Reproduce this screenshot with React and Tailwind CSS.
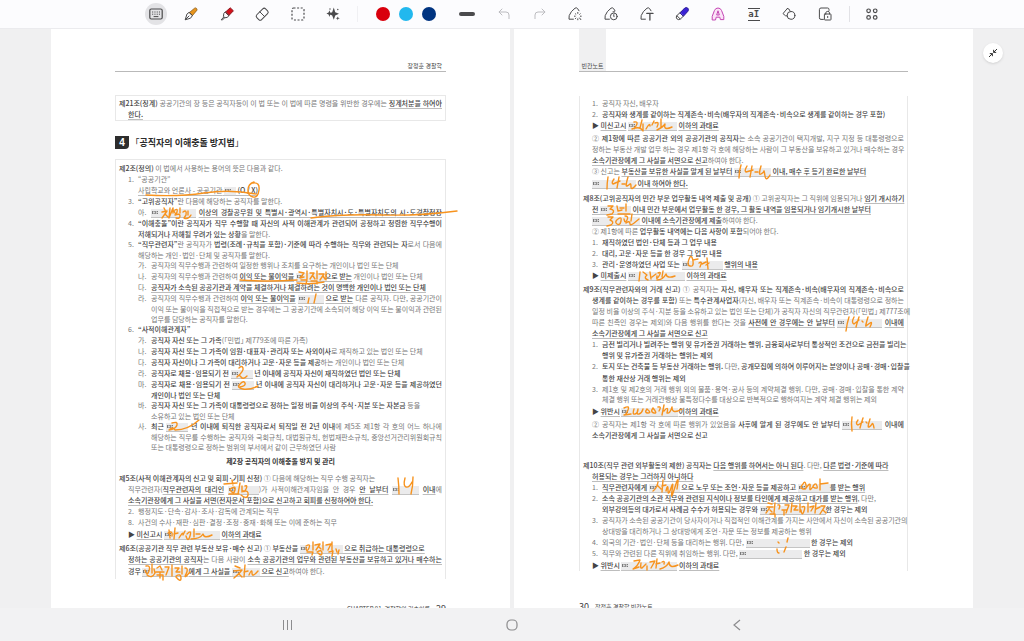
import clsx from 'clsx';

const PALETTE = ['bg-[#d9000d]', 'bg-[#22b8ee]', 'bg-[#003480]'];

// ---------- toolbar icons ----------

function Icon({ children, className = 'text-[#4a4a4c]' }) {
    return (
        <svg width="16" height="16" viewBox="0 0 16 16" fill="none" stroke="currentColor" strokeWidth="1" strokeLinecap="round" strokeLinejoin="round" className={className}>
            {children}
        </svg>
    );
}

const KeyboardIcon = () => (
    <Icon>
        <rect x="1.8" y="3" width="12.4" height="10" rx="1.5" strokeWidth="1.2" />
        <path d="M4.5 6h.3M6.8 6h.3M9.1 6h.3M11.3 6h.3M4.5 8.2h.3M6.8 8.2h.3M9.1 8.2h.3M11.3 8.2h.3M6 10.6h4" />
    </Icon>
);

const PenIcon = () => (
    <Icon>
        <path d="M6.5 6.5 11.6 2.2Q12.6 1.5 13.5 2.4T13.8 4.4L9.5 9.5Z" fill="#e8951d" stroke="#8a5a17" strokeWidth=".8" />
        <path d="M6.5 6.5 9.5 9.5 7.5 12.2 2.2 13.8 3.8 8.5ZM2.4 13.6 6 10" />
    </Icon>
);

const MarkerIcon = () => (
    <Icon>
        <path d="M6.6 6 11.2 1.8 14.4 4.8 10 9.4Z" fill="#d4111b" stroke="#8c1b22" />
        <path d="M6.6 6 10 9.4 8.4 11.4 5.6 11.8 4.4 10.4 4.8 7.8ZM4.8 11 2.2 13.8 3.4 14 5.6 11.8" />
    </Icon>
);

const EraserIcon = () => (
    <Icon>
        <rect x="2" y="4.8" width="12.4" height="6.8" rx="2" transform="rotate(-45 8.2 8.2)" />
        <path d="M5.8 5.8 10.6 10.6" />
    </Icon>
);

const SelectIcon = () => (
    <Icon>
        <rect x="2" y="2" width="12" height="12" rx="1.5" strokeWidth="1.2" strokeDasharray="2 1.6" strokeLinecap="butt" />
    </Icon>
);

const SparkleIcon = () => (
    <Icon>
        <path d="M8.8 1.6 10.2 6.2 14 7.8 10.2 9.6 8.8 13.8 7.2 9.6 3.4 7.8 7.2 6.2Z" fill="currentColor" stroke="none" />
        <path d="M4.4 4.2 5.2 6.6 7.4 7.6 5.2 8.6 4.4 11 3.6 8.6 1.4 7.6 3.6 6.6ZM12.8 10.4 13.3 11.8 14.8 12.3 13.3 12.8 12.8 14.2 12.2 12.8 10.8 12.3 12.2 11.8Z" fill="currentColor" stroke="none" />
        <path d="M12.8 3.4v.2M5 3v.1" strokeWidth="1.4" />
    </Icon>
);

const UndoIcon = () => (
    <Icon className="text-[#bcbcc0]">
        <path d="M6 3 3 6 6 9M3.2 6H10Q13 6 13 9V12.6" />
    </Icon>
);

const RedoIcon = () => (
    <Icon className="text-[#bcbcc0]">
        <path d="M10 3 13 6 10 9M12.8 6H6Q3 6 3 9V12.6" />
    </Icon>
);

// shared outline for the three "handwriting to ..." tools
const NIB = 'M6.4 13.2H2Q1.2 9.8 4.4 5.6L8 2.2Q9.4 1.2 10.6 2.6L12 4.8';

const ShapePenIcon = () => (
    <Icon>
        <path d={NIB} />
        <path d="M10.8 6.4v1M10.8 12.8v1M7.4 10.2h.8M13.4 10.2h.8M8.4 7.8l.5.5M12.6 12l1.2 1.6M13.2 7.8l-.5.5M8.4 12.6l.5-.5" />
    </Icon>
);

const TimedPenIcon = () => (
    <Icon>
        <path d={NIB} />
        <circle cx="10.8" cy="10.4" r="3.4" />
        <path d="M10.8 8.6v2h.2M10 5.8h1.6" />
    </Icon>
);

const TextPenIcon = () => (
    <Icon>
        <path d={NIB} />
        <path d="M7.8 7.4h6.2M10.9 7.4v6.6" strokeWidth="1.3" />
    </Icon>
);

const BrushIcon = () => (
    <Icon>
        <path d="M6.2 6.6 10.6 2.2Q12.4 .8 13.8 2.2T13.8 5.4L9.6 10Z" fill="#3b22d6" stroke="#2a1c94" />
        <path d="M6.2 6.6 3.2 9.2Q1.4 11 2.8 12.8 4.8 14.6 6.6 12.8L9.6 10M3 9.8 6.2 13" />
    </Icon>
);

const LetterIcon = () => (
    <Icon className="text-[#c445b4]">
        <path d="M2.2 13.6V10.4L4.4 4.6Q5.4 2 8 2T11.6 4.6L13.8 10.4V13.6H10.4L9.8 11.2H6.2L5.6 13.6Z" fill="#fbe3f7" />
        <path d="M6.8 8.6 8 4.8 9.2 8.6Z" fill="#fff" />
    </Icon>
);

const TextAlignIcon = () => (
    <span className="flex h-[13px] w-3 items-center justify-center border-y border-[#4a4a4c] font-['DejaVu_Sans_Mono',monospace] text-[9px] leading-[9px] font-bold text-[#4a4a4c]">aI</span>
);

const ShapesIcon = () => (
    <Icon>
        <path d="M6.4 2.4 2 7.6 4.6 9.8 6.4 10M6.4 2.4Q8.6 2.4 9.2 5.2" />
        <circle cx="10" cy="9.4" r="3.9" />
    </Icon>
);

const LockPageIcon = () => (
    <Icon>
        <path d="M6.4 13.4H4Q2.4 13.4 2.4 11.8V3.6Q2.4 2 4 2H10.6Q12 2 12 3.6V4.4" />
        <rect x="7.4" y="8" width="6.6" height="6" rx=".6" />
        <path d="M8.8 8V6.8Q9 5.4 10.7 5.4T12.6 6.8V8M10.7 10.4v1.2" />
    </Icon>
);

const AppsIcon = () => (
    <Icon>
        <g strokeWidth="1.2">
            <circle cx="4.6" cy="4.8" r="1.8" />
            <circle cx="11.2" cy="4.8" r="1.8" />
            <circle cx="4.6" cy="11.4" r="1.8" />
            <circle cx="11.2" cy="11.4" r="1.8" />
        </g>
    </Icon>
);

function Tool({ label, active, children }) {
    return (
        <button
            type="button"
            aria-label={label}
            className={clsx('flex size-[22px] items-center justify-center rounded-full', active && 'bg-[#e3e3e6]')}
        >
            {children}
        </button>
    );
}

function Toolbar() {
    return (
        <header className="flex h-[29px] shrink-0 items-center justify-center border-b border-[#ebebee] bg-[#fcfcfe]">
            <div className="grid w-[213px] grid-cols-6 justify-items-center">
                <Tool label="키보드" active><KeyboardIcon /></Tool>
                <Tool label="펜"><PenIcon /></Tool>
                <Tool label="형광펜"><MarkerIcon /></Tool>
                <Tool label="지우개"><EraserIcon /></Tool>
                <Tool label="선택"><SelectIcon /></Tool>
                <Tool label="AI"><SparkleIcon /></Tool>
            </div>
            <div className="ml-1.5 h-4 w-px bg-[#f0f0f3]" />
            <div className="ml-[18px] flex gap-[9px]">
                {PALETTE.map((color) => (
                    <button key={color} type="button" aria-label="색상" className={clsx('size-3.5 rounded-full', color)} />
                ))}
            </div>
            <button type="button" aria-label="굵기" className="ml-[23px] h-1 w-4 rounded-full bg-[#4b4b4d]" />
            <div className="ml-[11px] grid w-[357px] grid-cols-10 justify-items-center">
                <Tool label="실행 취소"><UndoIcon /></Tool>
                <Tool label="다시 실행"><RedoIcon /></Tool>
                <Tool label="도형 변환"><ShapePenIcon /></Tool>
                <Tool label="시간 펜"><TimedPenIcon /></Tool>
                <Tool label="텍스트 변환"><TextPenIcon /></Tool>
                <Tool label="브러시"><BrushIcon /></Tool>
                <Tool label="글자 스타일"><LetterIcon /></Tool>
                <Tool label="글자 정렬"><TextAlignIcon /></Tool>
                <Tool label="도형"><ShapesIcon /></Tool>
                <Tool label="페이지 잠금"><LockPageIcon /></Tool>
            </div>
            <div className="ml-1.5 h-4 w-px bg-[#e2e2e6]" />
            <div className="ml-[7px] flex w-[29px] justify-center">
                <Tool label="더보기"><AppsIcon /></Tool>
            </div>
        </header>
    );
}

// ---------- document pieces ----------

function Ink({ d }) {
    return (
        <svg className="pointer-events-none absolute top-0 left-0 z-10 size-full overflow-visible" fill="none" stroke="#f7931e" strokeWidth="1.4" strokeLinecap="round" strokeLinejoin="round">
            <path d={d} />
        </svg>
    );
}

// grey gap in the text, with its small tag and whatever was written into it
function Blank({ w, ink }) {
    return (
        <span className={clsx('relative inline-block h-[9px] border-b border-[#c4c4c4] bg-[#ebebec] align-middle', w)}>
            <svg className="absolute top-0.5 left-px" width="6" height="3" fill="#7a7a7a">
                <path d="M0 0h1v3H0zM1.5 0h1.2v1.2H1.5zM1.5 2h1.2v1H1.5zM3.2 0h1v3h-1zM4.8 0H6v1.2H4.8zM4.8 2H6v1H4.8z" />
            </svg>
            {ink && <Ink d={ink} />}
        </span>
    );
}

const B = ({ children }) => <span className="font-medium text-[#444]">{children}</span>;

const U = ({ children, ink }) => (
    <span className="relative font-medium text-[#444] underline decoration-[#bdbdbd] decoration-1 underline-offset-2">
        {children}
        {ink && <Ink d={ink} />}
    </span>
);

const INDENT = ['pl-0', 'pl-[9px]', 'pl-[19px]', 'pl-8'];

function Row({ lv = 0, m, full, tight, gap, children }) {
    return (
        <div className={clsx('flex whitespace-nowrap', INDENT[lv], tight ? 'h-2.5 leading-[10px]' : 'h-[11px] leading-[11px]', gap)}>
            {m && <span className={clsx('shrink-0', lv === 2 ? 'w-[13px]' : 'w-2.5')}>{m}</span>}
            <div className={clsx('min-w-0 flex-1', full && '[text-align-last:justify]')}>{children}</div>
        </div>
    );
}

function LeftPage() {
    return (
        <article className="overflow-hidden bg-white px-16">
            <div className="flex h-[43px] items-end justify-end border-b border-[#b9b9b9] pr-1 text-[6px] leading-[10px] text-[#444]">장정훈 경찰학</div>

            <section className="mt-[23px] border border-[#e8e8e8] px-[3px] pt-0.5">
                <Row full><B>제21조(징계)</B> 공공기관의 장 등은 공직자등이 이 법 또는 이 법에 따른 명령을 위반한 경우에는 <U>징계처분을 하여야</U></Row>
                <Row lv={1}><U>한다.</U></Row>
            </section>

            <div className="mt-[15px] flex h-[13px] items-center gap-1.5">
                <span className="flex h-[13px] w-3.5 items-center justify-center rounded-br-[4px] bg-[#2d2d2d] font-['Liberation_Sans',sans-serif] text-[10px] font-bold text-white">4</span>
                <h2 className="text-[9px] leading-[13px] font-bold text-[#2c2c2c]"><span className="font-normal">「</span>공직자의 이해충돌 방지법<span className="font-normal">」</span></h2>
            </div>

            <section className="mt-2.5 border border-b-0 border-[#e8e8e8] px-[3px] pt-[3px] pb-0.5">
                <Row><B>제2조(정의)</B> 이 법에서 사용하는 용어의 뜻은 다음과 같다.</Row>
                <Row lv={1} m="1.">“공공기관”</Row>
                <Row lv={2}>
                    <span className="relative underline decoration-[#bdbdbd] underline-offset-2">
                        사립학교와 언론사 - 공공기관{' '}
                        <Ink d="M8 10Q40 12 66 8T118 9" />
                    </span>
                    <Blank w="w-3" />
                    <U> (O / <span className="relative">X<Ink d="M3 -3Q-3 -1 -3 5T2 12 8 5 2 -2" /></span>)</U>
                </Row>
                <Row lv={1} m="3."><B>“고위공직자”</B>란 다음에 해당하는 공직자를 말한다.</Row>
                <Row lv={2} m="아." full>
                    <Blank w="w-[45px]" ink="M13 -1L14 1M11 3L16 2Q14 5 11 9M14 5L17 8M19 -1L18 9 22 -1 22 4M24 1Q27 -1 26 3T23 2M29 -1V4M24 6Q29 4 29 7T25 9M32 3Q36 0 35 6L33 9Q37 11 40 6M37 2V6" />{' '}
                    <U>이상의 경찰공무원 및 특별시·광역시·<span className="relative">특별자치시·도·특별자치도의<Ink d="M0 11Q30 7 70 8T146 4" /></span> 시·도경찰청장</U>
                </Row>
                <Row lv={1} m="4." full><B>“이해충돌”이란 공직자가 직무 수행할 때 자신의 사적 이해관계가 관련되어 공정하고 청렴한 직무수행이</B></Row>
                <Row lv={2} tight><B>저해되거나 저해될 우려가 있는 상황</B>을 말한다.</Row>
                <Row lv={1} m="5." full><B>“직무관련자”</B>란 공직자가 <B>법령(조례·규칙을 포함)·기준에 따라 수행하는 직무와 관련되는 자</B>로서 다음에</Row>
                <Row lv={2} tight>해당하는 개인·법인·단체 및 공직자를 말한다.</Row>
                <Row lv={2} m="가.">공직자의 직무수행과 관련하여 일정한 행위나 조치를 요구하는 개인이나 법인 또는 단체</Row>
                <Row lv={2} m="나.">
                    공직자의 직무수행과 관련하여 <U ink="M1 9Q30 11 58 9">이익 또는 불이익을</U>{' '}
                    <Blank w="w-[29px]" ink="M1 10Q14 12 28 9M3 -1L8 0 4 5 8 4M11 -2V6M5 7L11 7 10 11M14 0L18 0 14 6M17 3L19 6M21 -2V6M15 8H21V11M23 1L28 1 24 7M27 3L29 6M30 -1V7" />
                    <U>으로 받는</U> 개인이나 법인 또는 단체
                </Row>
                <Row lv={2} m="다."><U>공직자가 소속된 공공기관과 계약을 체결하거나 체결하려는 것이 명백한 개인이나 법인 또는 단체</U></Row>
                <Row lv={2} m="라." full>
                    공직자의 직무수행과 관련하여 <U>이익 또는 불이익을</U> <Blank w="w-[26px]" ink="M11 3L10 8M18 -1L16 8" /> <U>으로 받는</U> 다른 공직자. 다만, 공공기관이
                </Row>
                <Row lv={3} full tight>이익 또는 불이익을 직접적으로 받는 경우에는 그 공공기관에 소속되어 해당 이익 또는 불이익과 관련된</Row>
                <Row lv={3} tight>업무를 담당하는 공직자를 말한다.</Row>
                <Row lv={1} m="6."><B>“사적이해관계자”</B></Row>
                <Row lv={2} m="가."><B>공직자 자신 또는 그 가족</B>(「민법」 제779조에 따른 가족)</Row>
                <Row lv={2} m="나."><B>공직자 자신 또는 그 가족이 임원·대표자·관리자 또는 사외이사</B>로 재직하고 있는 법인 또는 단체</Row>
                <Row lv={2} m="다."><B>공직자 자신이나 그 가족이 대리하거나 고문·자문 등을 제공</B>하는 개인이나 법인 또는 단체</Row>
                <Row lv={2} m="라."><B>공직자로 채용·임용되기 전 </B><Blank w="w-[22px]" ink="M8 -2Q11 -5 12 -2T6 7Q8 4 10 7T16 6" /><B> 년 이내에 공직자 자신이 재직하였던 법인 또는 단체</B></Row>
                <Row lv={2} m="마." full>
                    <B>공직자로 채용·임용되기 전 </B><Blank w="w-[22px]" ink="M8 6Q14 5 13 2T8 3 11 8 26 5" /><B> 년 이내에 공직자 자신이 대리하거나 고문·자문 등을 제공하였던</B>
                </Row>
                <Row lv={3} tight><B>개인이나 법인 또는 단체</B></Row>
                <Row lv={2} m="바."><B>공직자 자신 또는 그 가족이 대통령령으로 정하는 일정 비율 이상의 주식·지분 또는 자본금</B> 등을</Row>
                <Row lv={3} tight>소유하고 있는 법인 또는 단체</Row>
                <Row lv={2} m="사." full>
                    <B>최근 </B><Blank w="w-[22px]" ink="M6 0Q12 -2 11 2T3 7Q7 3 9 7 22 7 33 -3" /> <B>년 이내에 퇴직한 공직자로서 퇴직일 전 2년 이내</B>에 제5조 제1항 각 호의 어느 하나에
                </Row>
                <Row lv={3} full tight>해당하는 직무를 수행하는 공직자와 국회규칙, 대법원규칙, 헌법재판소규칙, 중앙선거관리위원회규칙</Row>
                <Row lv={3} tight>또는 대통령령으로 정하는 범위의 부서에서 같이 근무하였던 사람</Row>

                <h3 className="mt-1 h-[11px] text-center leading-[11px] font-bold text-[#383838]">제2장 공직자의 이해충돌 방지 및 관리</h3>

                <Row gap="mt-1.5"><B>제5조(사적 이해관계자의 신고 및 회피·기피 신청)</B> ① 다음에 해당하는 직무 수행 공직자는</Row>
                <Row lv={1} full>
                    직무관련자(<U>직무관련자의 대리인</U>{' '}
                    <Blank w="w-[31px]" ink="M-4 -2L9 -3M4 -6L5 -1M2 3Q8 -1 7 4T2 4M1 8H11M12 -3L10 8M14 0V6M17 0Q20 -1 18 3T15 5Q21 4 20 9T13 9" />
                    )가 사적이해관계자임을 안 경우 <U>안 날부터</U> <Blank w="w-[27px]" ink="M6 -8Q7 0 7 8M13 -8Q11 0 14 1T20 -4M21 -9Q21 0 19 8" /> <U>이내</U>에
                </Row>
                <Row lv={1}><U>소속기관장에게 그 사실을 서면(전자문서 포함)으로 신고하고 회피를 신청하여야 한다.</U></Row>
                <Row lv={1} m="2.">행정지도·단속·감사·조사·감독에 관계되는 직무</Row>
                <Row lv={1} m="8.">사건의 수사·재판·심판·결정·조정·중재·화해 또는 이에 준하는 직무</Row>
                <Row lv={1} gap="mt-px"><B>▶ <U>미신고시</U> <Blank w="w-[56px]" ink="M5 -1L6 7M4 2Q9 -1 8 5M11 -3L10 8M10 3L14 2M15 7Q20 -1 19 4L21 0M23 3Q28 -2 26 5T22 5M30 -2V6M32 3H36M27 8Q36 8 39 3 40 8 48 4" /> <U>이하의 과태료</U></B></Row>

                <Row gap="mt-[3px]">
                    <B>제6조(공공기관 직무 관련 부동산 보유·매수 신고)</B> ① <B>부동산을 </B>
                    <Blank w="w-[43px]" ink="M6 1Q11 -2 9 3T6 3M13 -3V5M7 7H13L12 10M15 0L20 -1 16 5M19 2L21 4M23 -3V5M17 7Q22 4 22 8T18 8M26 0L31 -1 28 5M32 -3V5M29 7L33 6 32 11M36 4L37 7M39 5L38 9" />
                    <U> 으로 취급하는 대통령령으로</U>
                </Row>
                <Row lv={1} full><U>정하는 공공기관의 공직자</U>는 다음 사람이 <U>소속 공공기관의 업무와 관련된 부동산을 보유하고 있거나 매수하는</U></Row>
                <Row lv={1} gap="mt-px">
                    <B>경우 </B>
                    <Blank w="w-[46px]" ink="M4 -2Q9 -3 7 3T3 2M10 -4V5M5 7Q10 11 13 5L12 1M15 0L18 -2 20 2M14 4H22M18 4V10M15 7H21V12M23 -1L27 -1 24 7M30 -3V8M33 0L37 0 34 4 38 4M40 -2V6M34 8Q39 5 39 10T34 9M43 0Q47 0 44 6T48 4" />
                    <U>에게 그 사실을 </U>
                    <Blank w="w-[28px]" ink="M3 -2L8 0M2 3L10 2Q7 6 2 10M7 6L10 9M13 -3L12 9M12 4L16 3M17 7Q20 0 20 5T26 3" />
                    <U> 으로 신고</U>하여야 한다.
                </Row>
            </section>

            <footer className="mt-6 flex h-3 items-center justify-end gap-1.5 text-[6px] leading-3 text-[#444]">
                <span>CHAPTER 01. 경찰학의 기초이론</span>
                <span className="text-[9px]">29</span>
            </footer>
        </article>
    );
}

function RightPage() {
    return (
        <article className="overflow-hidden bg-white px-[65px]">
            <div className="flex h-[43px] items-end border-b border-[#b9b9b9] text-[6px] leading-[10px] text-[#444]">
                <span className="flex h-full w-[27px] items-end justify-center bg-[#f0f0f1]">빈칸노트</span>
            </div>

            <section className="mt-6 border-x border-[#e8e8e8] px-[3px] pt-0.5">
                <Row lv={1} m="1.">공직자 자신, 배우자</Row>
                <Row lv={1} m="2."><B>공직자와 생계를 같이하는 직계존속·비속(배우자의 직계존속·비속으로 생계를 같이하는 경우 포함)</B></Row>
                <Row lv={1}><B>▶ <U>미신고시</U> <Blank w="w-[49px]" ink="M6 0Q11 -1 8 4T7 5M4 7Q12 4 14 8M14 -2L12 6M15 2V9M18 7Q22 0 22 4M24 3L26 -1M27 1Q32 -1 29 5M33 -3V5M29 8Q35 5 37 2 35 9 44 5" /> <U>이하의 과태료</U></B></Row>

                <Row lv={1} full gap="mt-0.5">② <B>제1항에 따른 공공기관 외의 공공기관의 공직자</B>는 소속 공공기관이 택지개발, 지구 지정 등 대통령령으로</Row>
                <Row lv={1} full>정하는 부동산 개발 업무 하는 경우 제1항 각 호에 해당하는 사람이 그 부동산을 보유하고 있거나 매수하는 경우</Row>
                <Row lv={1}><U>소속기관장에게 그 사실을 서면으로 신고</U>하여야 한다.</Row>
                <Row lv={1}>
                    ③ 신고는 <U>부동산을 보유한 사실을 알게 된 날부터 </U>
                    <Blank w="w-[37px]" ink="M7 -3Q5 3 5 10M13 -2Q10 3 12 4L19 2M18 -2Q17 4 16 9M21 4H24M27 -2Q24 8 27 6T30 3 31 8 36 7" />
                    <U> 이내, 매수 후 등기 완료한 날부터</U>
                </Row>
                <Row lv={1} gap="mt-px"><Blank w="w-[44px]" ink="M16 -3Q15 3 15 9M22 -1Q19 3 21 4L28 1M27 -3Q26 3 25 8M30 4H33M36 -3Q33 7 35 6T38 4 39 7 44 5" /><U> 이내 하여야 한다.</U></Row>

                <Row full gap="mt-1"><B>제8조(고위공직자의 민간 부문 업무활동 내역 제출 및 공개)</B> ① 고위공직자는 그 직위에 임용되거나 <U>임기 개시하기</U></Row>
                <Row lv={1}>
                    <U>전 </U><Blank w="w-[31px]" ink="M8 0L13 0 10 3Q16 4 12 8L7 9M17 0L18 5 22 4M20 2H24M26 -2V5M18 8H30" />
                    <U> 이내 민간 부문에서 업무활동 한 경우, 그 활동 내역을 임용되거나 임기개시한 날부터</U>
                </Row>
                <Row lv={1}><Blank w="w-[48px]" ink="M16 0L21 0 18 3Q23 5 19 8L15 9M26 2Q22 5 25 7T29 4 26 2M33 -1Q37 -1 35 3T32 2M40 -3L39 4M34 6Q38 3 38 7 38 10 47 2" /><U> 이내에 소속기관장에게 제출</U>하여야 한다.</Row>
                <Row lv={1}>② 제1항에 따른 <B>업무활동 내역에는 다음 사항이 포함</B>되어야 한다.</Row>
                <Row lv={1} m="1."><B>재직하였던 법인·단체 등과 그 업무 내용</B></Row>
                <Row lv={1} m="2."><B>대리, 고문·자문 등을 한 경우 그 업무 내용</B></Row>
                <Row lv={1} m="3."><B>관리·운영하였던 사업 또는 <Blank w="w-[41px]" ink="M8 -4Q4 4 8 5T11 0 8 -4M11 -1L16 -2M17 2Q21 -1 18 6M20 3L24 1M25 -3L26 8M24 4L27 2" /> <U>행위의 내용</U></B></Row>
                <Row lv={1}><B>▶ <U>미제출시</U> <Blank w="w-[57px]" ink="M12 0L11 9M15 0L19 3Q15 6 20 8M22 0L23 7M24 5L28 2M30 1Q34 -1 31 4T29 4M35 -1L34 5M29 8Q35 8 38 2 39 7 47 4" /> <U>이하의 과태료</U></B></Row>

                <Row gap="mt-[3px]" full><B>제9조(직무관련자와의 거래 신고)</B> ① 공직자는 <B>자신, 배우자 또는 직계존속·비속(배우자의 직계존속·비속으로</B></Row>
                <Row lv={1} full><B>생계를 같이하는 경우를 포함)</B> 또는 <B>특수관계사업자</B>(자신, 배우자 또는 직계존속·비속이 대통령령으로 정하는</Row>
                <Row lv={1} full>일정 비율 이상의 주식·지분 등을 소유하고 있는 법인 또는 단체)가 공직자 자신의 직무관련자(「민법」 제777조에</Row>
                <Row lv={1} full>
                    따른 친족인 경우는 제외)와 다음 행위를 한다는 것을 <U>사전에 안 경우에는 안 날부터</U>{' '}
                    <Blank w="w-[45px]" ink="M12 -2Q10 4 9 12M17 -2Q14 4 17 5L22 1M22 -2Q20 4 19 8M25 2L26 3M31 -2Q28 8 29 7T33 4 33 8" /> <U>이내에</U>
                </Row>
                <Row lv={1}><U>소속기관장에게 그 사실을 서면으로 신고</U></Row>
                <Row lv={1} m="1." full><B>금전 빌리거나 빌려주는 행위 및 유가증권 거래하는 행위. 금융회사로부터 통상적인 조건으로 금전을 빌리는</B></Row>
                <Row lv={2}><B>행위 및 유가증권 거래하는 행위는 제외</B></Row>
                <Row lv={1} m="2." full><B>토지 또는 건축물 등 부동산 거래하는 행위.</B> 다만, <B>공개모집에 의하여 이루어지는 분양이나 공매·경매·입찰을</B></Row>
                <Row lv={2} gap="mt-px"><B>통한 재산상 거래 행위는 제외</B></Row>
                <Row lv={1} m="3." full tight>제1호 및 제2호의 거래 행위 외의 물품·용역·공사 등의 계약체결 행위. 다만, 공매·경매·입찰을 통한 계약</Row>
                <Row lv={2}>체결 행위 또는 거래관행상 불특정다수를 대상으로 반복적으로 행하여지는 계약 체결 행위는 제외</Row>
                <Row lv={1} gap="mt-px"><B>▶ <U>위반시</U> <Blank w="w-[57px]" ink="M3 0Q9 -3 7 2T3 7L10 6M13 1Q11 7 14 6T17 1Q15 7 18 6T22 1M26 1Q23 5 27 5T26 1M32 0Q29 4 33 5T32 0M37 -1Q41 -2 38 3M43 -3L41 7M43 3Q48 -3 46 5 49 6 51 -1 51 7 61 1" /><U>이하의 과태료</U></B></Row>

                <Row lv={1} full gap="mt-0.5">
                    ② 공직자는 제1항 각 호에 따른 행위가 있었음을 <B>사후에 알게 된 경우에도 안 날부터 </B>
                    <Blank w="w-[40px]" ink="M10 -4Q9 2 10 10M16 -1Q13 3 16 4L21 1M21 -3Q19 3 18 7M24 1L25 2M28 -2Q25 7 27 6T30 3 32 7" /><B> 이내에</B>
                </Row>
                <Row lv={1}><B>소속기관장에게 그 사실을 서면으로 신고</B></Row>

                <Row gap="mt-[19px]"><B>제10조(직무 관련 외부활동의 제한)</B> <B>공직자는 <U>다음 행위를 하여서는 아니 된다</U></B>. 다만, <U>다른 법령·기준에 따라</U></Row>
                <Row lv={1}><U>허용되는 경우는 그러하지 아니하다</U></Row>
                <Row lv={1} m="1.">
                    <U>직무관련자에게 </U>
                    <Blank w="w-[31px]" ink="M9 -2Q8 4 4 7M8 1L12 5M14 -4L13 8M13 2L17 1M17 7Q19 -1 19 6T22 4 23 7 26 3 28 5" />
                    <U> 으로 노무 또는 조언·자문 등을 제공하고 </U>
                    <Blank w="w-[32px]" ink="M5 0Q1 4 5 5T8 1 5 0M8 4Q13 -3 12 3T16 1M17 0Q13 3 17 4T18 0M22 -5V6M22 0L30 -1" />
                    <U>를 받는 행위</U>
                </Row>
                <Row lv={1} m="2."><U>소속 공공기관의 소관 직무와 관련된 지식이나 정보를 타인에게 제공하고 대가를 받는 행위</U>, 다만,</Row>
                <Row lv={2}>
                    <B>외부강의등의 대가로서 사례금 수수가 허용되는 경우와 </B>
                    <Blank w="w-[66px]" ink="M8 -3L12 -2M7 1H13M10 1Q7 6 6 7M10 4L12 6M15 -3L14 7M10 8H15V11M18 -1Q21 -2 19 3M22 4H27M24 5V9M25 -1L29 -1 26 7M32 -3L31 6M33 0L37 0 34 4 38 4M40 -2V6M42 1Q46 -1 44 5T41 4M48 -3V6M50 1L54 0 51 5M56 -3L55 7M56 3L60 1M61 0L65 0 60 8M63 4L66 7" />
                    <B>한 경우는 제외</B>
                </Row>
                <Row lv={1} m="3." full>공직자가 소속된 공공기관이 당사자이거나 직접적인 이해관계를 가지는 사안에서 자신이 소속된 공공기관의</Row>
                <Row lv={2}>상대방을 대리하거나 그 상대방에게 조언·자문 또는 정보를 제공하는 행위</Row>
                <Row lv={1} m="4.">외국의 기관·법인·단체 등을 대리하는 행위. 다만, <Blank w="w-[64px]" ink="M32 3L33 4M42 -1L41 3" /> <B>한 경우는 제외</B></Row>
                <Row lv={1} m="5.">직무와 관련된 다른 직위에 취임하는 행위. 다만, <Blank w="w-[63px]" ink="M38 -1Q38 3 40 3M47 -3L45 2" /> <B>한 경우는 제외</B></Row>
                <Row lv={1} gap="mt-px"><B>▶ <U>위반시</U> <Blank w="w-[56px]" ink="M13 -1L19 -2Q17 4 12 7L18 5M20 1Q19 7 21 6L25 2M26 4V8M29 0L34 -1 30 6M36 -3L35 6M35 2L39 1M41 0Q44 -2 43 2M39 7Q46 5 48 0 48 7 57 3" /> <U>이하의 과태료</U></B></Row>
            </section>

            <footer className="mt-[30px] flex h-3 items-center gap-1.5 text-[6px] leading-3 text-[#444]">
                <span className="text-[9px]">30</span>
                <span>장정훈 경찰학 빈칸노트</span>
            </footer>
        </article>
    );
}

function NavBar() {
    return (
        <nav className="flex h-[33px] shrink-0 items-center justify-center bg-[#f2f2f3] text-[#8c8c8e]">
            <div className="grid w-[675px] grid-cols-3 justify-items-center">
                <button type="button" aria-label="최근 앱" className="flex h-3.5 items-center gap-[3px]">
                    <span className="h-2.5 w-px bg-current" />
                    <span className="h-2.5 w-px bg-current" />
                    <span className="h-2.5 w-px bg-current" />
                </button>
                <button type="button" aria-label="홈">
                    <svg width="14" height="14" fill="none" stroke="currentColor" strokeWidth="1.2"><rect x="2" y="2" width="10" height="10" rx="4" /></svg>
                </button>
                <button type="button" aria-label="뒤로">
                    <svg width="14" height="14" fill="none" stroke="currentColor" strokeWidth="1.2"><path d="M10 2 4 7 10 12" /></svg>
                </button>
            </div>
        </nav>
    );
}

export default function App() {
    return (
        <div className="flex h-screen flex-col overflow-hidden bg-[#f0f0f1] font-['Noto_Sans_CJK_KR',sans-serif] text-[7px] text-[#787878] [font-feature-settings:'halt']">
            <Toolbar />
            <main className="relative grid min-h-0 flex-1 grid-cols-2 gap-1 overflow-hidden px-[51px]">
                <LeftPage />
                <RightPage />
                <button type="button" aria-label="축소" className="absolute top-3.5 right-[21px] flex size-5 items-center justify-center rounded-full bg-white text-[#333] shadow">
                    <svg width="10" height="10" fill="none" stroke="currentColor" strokeWidth="1"><path d="M9 1 5.6 4.4M5.6 1.8V4.4H8.2M1 9 4.4 5.6M1.8 5.6H4.4V8.2" /></svg>
                </button>
            </main>
            <NavBar />
        </div>
    );
}
